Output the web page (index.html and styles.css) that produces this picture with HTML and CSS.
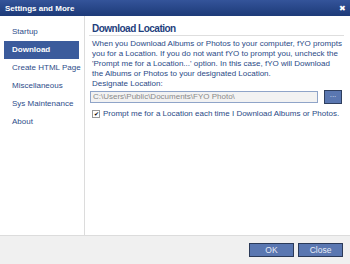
FILE: index.html
```html
<!DOCTYPE html>
<html>
<head>
<meta charset="utf-8">
<link rel="stylesheet" href="styles.css">
</head>
<body>
<div class="window">
  <div class="titlebar">
    <span class="title">Settings and More</span>
    <span class="close">&#x2716;</span>
  </div>
  <div class="main">
    <div class="nav">
      <div class="item">Startup</div>
      <div class="item active">Download</div>
      <div class="item">Create HTML Page</div>
      <div class="item">Miscellaneous</div>
      <div class="item">Sys Maintenance</div>
      <div class="item">About</div>
    </div>
    <div class="content">
      <div class="heading">Download Location</div>
      <p class="desc">When you Download Albums or Photos to your computer, fYO prompts<br>you for a Location. If you do not want fYO to prompt you, uncheck the<br>'Prompt me for a Location...' option. In this case, fYO will Download<br>the Albums or Photos to your designated Location.</p>
      <div class="label">Designate Location:</div>
      <div class="pathrow">
        <div class="path">C:\Users\Public\Documents\FYO Photo\</div>
        <div class="browse">...</div>
      </div>
      <div class="checkrow">
        <span class="check">&#x2714;</span>
        <span>Prompt me for a Location each time I Download Albums or Photos.</span>
      </div>
    </div>
  </div>
  <div class="footer">
    <div class="btn">OK</div>
    <div class="btn">Close</div>
  </div>
</div>
</body>
</html>
```
FILE: styles.css
```css
body {
  margin: 0;
  font-family: "Liberation Sans", Arial, sans-serif;
  font-size: 8px;
  color: #2b4a86;
}

.window {
  width: 350px;
  height: 264px;
  display: flex;
  flex-direction: column;
  background: white;
  white-space: nowrap;
}

.titlebar {
  height: 16px;
  background: linear-gradient(#34549a, #1d3a78);
  display: flex;
  align-items: center;
  justify-content: space-between;
  padding: 0 4px 0 5px;
  color: white;
}

.title {
  font-weight: bold;
  font-size: 8px;
}

.close {
  font-size: 8px;
}

.main {
  flex: 1;
  display: flex;
}

.nav {
  width: 84px;
  flex: none;
  border-right: 1px solid #dcdcdc;
  padding-top: 7px;
}

.item {
  height: 18px;
  line-height: 18px;
  margin: 0 5px 0 4px;
  padding-left: 8px;
  color: #2e4d8a;
}

.item.active {
  background: #3b5b9c;
  color: white;
  font-weight: bold;
}

.content {
  flex: 1;
  padding: 7px 6px 0 4px;
}

.heading {
  font-size: 10px;
  font-weight: bold;
  letter-spacing: -0.5px;
  color: #1f3f7e;
  padding: 0 0 1px 3px;
  border-bottom: 1px solid #dedede;
}

.desc {
  margin: 3px 0 0 3px;
  line-height: 10px;
}

.label {
  margin: 0 0 0 3px;
  line-height: 10px;
}

.pathrow {
  display: flex;
  align-items: center;
  margin-top: 1px;
  margin-left: 1px;
}

.path {
  width: 224px;
  height: 10px;
  line-height: 10px;
  border: 1px solid #8fa4c8;
  background: #f2f2f2;
  color: #8a8a8a;
  padding-left: 2px;
}

.browse {
  margin-left: 6px;
  width: 16px;
  height: 12px;
  line-height: 8px;
  text-align: center;
  background: #5a77b1;
  border: 1px solid #2f3f5f;
  color: #d8e0f0;
}

.checkrow {
  display: flex;
  align-items: center;
  margin: 5px 0 0 3px;
}

.check {
  width: 6px;
  height: 6px;
  border: 1px solid #999;
  font-size: 6px;
  line-height: 6px;
  color: black;
  margin-right: 3px;
  text-align: center;
}

.footer {
  height: 28px;
  background: #f0f0f0;
  border-top: 1px solid #dcdcdc;
  display: flex;
  justify-content: flex-end;
  align-items: center;
  gap: 4px;
  padding-right: 7px;
}

.btn {
  width: 43px;
  height: 12px;
  line-height: 12px;
  text-align: center;
  background: #5a77b1;
  border: 1px solid #2b3a58;
  color: #e8ecf6;
  font-size: 8.5px;
}
```
